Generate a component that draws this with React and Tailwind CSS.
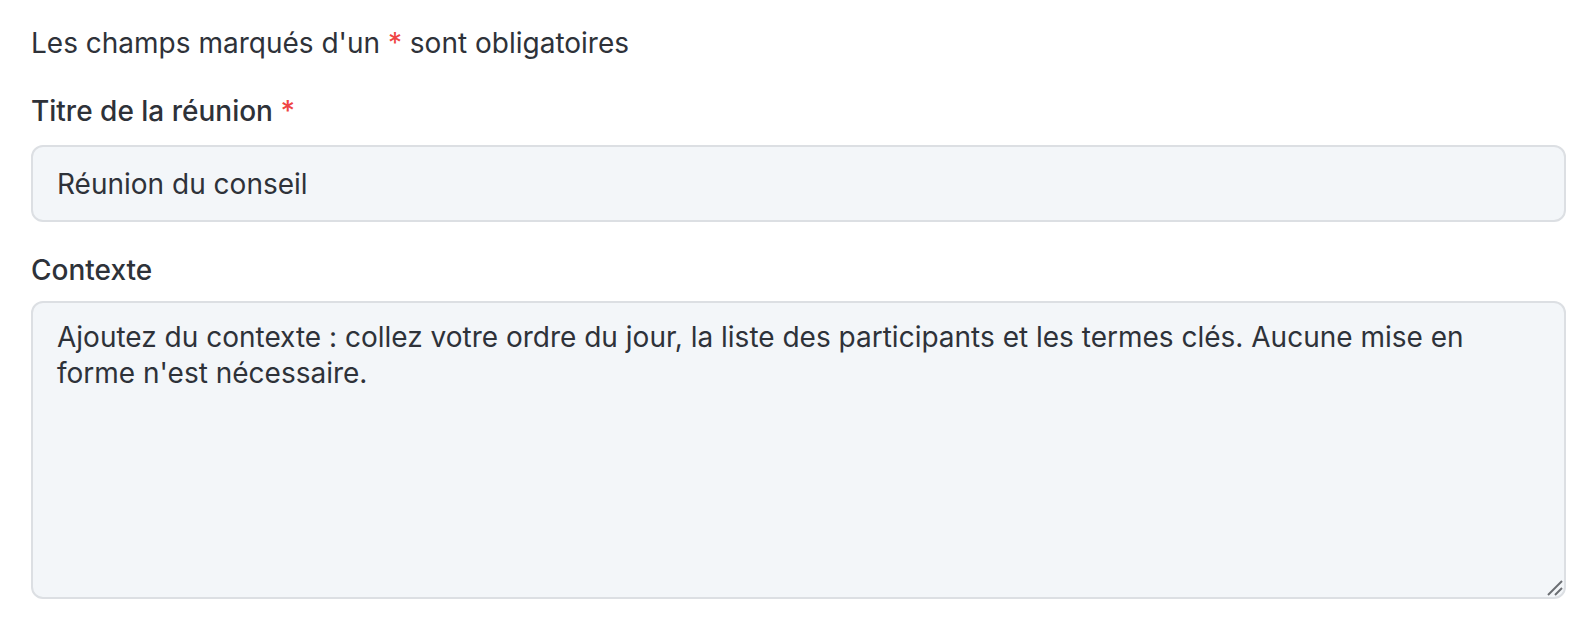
import React from 'react';

const App = () => {
  return (
    <div className="min-h-screen bg-white pl-[31px] pr-[28px] pt-[23px] font-['Inter',sans-serif] text-[28px] text-[#2e3239]">
      <p className="leading-[40px]">
        Les champs marqués d'un <span className="text-[#ef4444]">*</span> sont obligatoires
      </p>

      <div className="mt-[28px]">
        <label htmlFor="titre" className="block font-medium leading-[40px]">
          Titre de la réunion <span className="text-[#ef4444]">*</span>
        </label>
        <input
          id="titre"
          type="text"
          defaultValue="Réunion du conseil"
          className="mt-[14px] block h-[77px] w-full rounded-[12px] border-2 border-[#dcdfe3] bg-[#f3f6f9] px-[24px] leading-[40px] text-[#2e3239] outline-none"
        />
      </div>

      <div className="mt-[28px]">
        <label htmlFor="contexte" className="block font-medium leading-[40px]">
          Contexte
        </label>
        <div className="relative mt-[11px]">
          <textarea
            id="contexte"
            defaultValue="Ajoutez du contexte : collez votre ordre du jour, la liste des participants et les termes clés. Aucune mise en forme n'est nécessaire."
            className="block h-[298px] w-full resize-none rounded-[12px] border-2 border-[#dcdfe3] bg-[#f3f6f9] px-[24px] pt-[16px] leading-[36px] text-[#2e3239] outline-none"
          />
          {/* resize grip */}
          <svg
            className="pointer-events-none absolute bottom-[3px] right-[3px]"
            width="16"
            height="16"
            viewBox="0 0 16 16"
          >
            <path d="M15 1 L1 15" stroke="#6b6e73" strokeWidth="2" />
            <path d="M15 8 L8 15" stroke="#6b6e73" strokeWidth="2" />
          </svg>
        </div>
      </div>
    </div>
  );
};

export default App;
